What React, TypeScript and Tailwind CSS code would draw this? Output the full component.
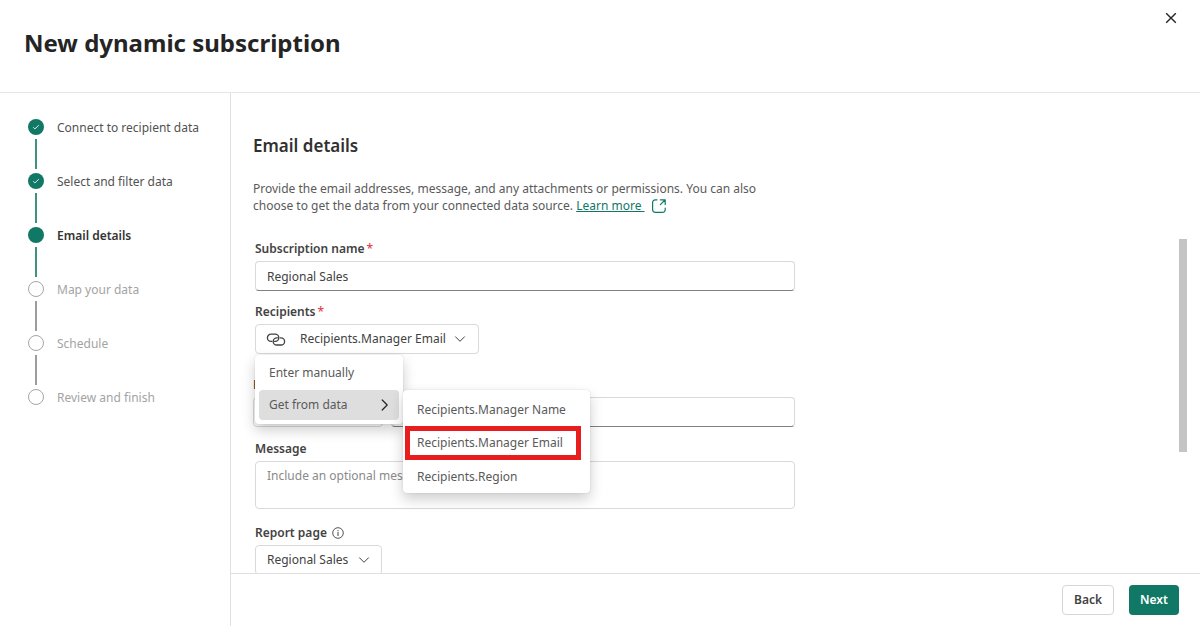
import { clsx } from "clsx";
import { type FC, type ReactNode, useState } from "react";

type StepState = "done" | "current" | "todo";

const STEPS: { label: string; state: StepState }[] = [
	{ label: "Connect to recipient data", state: "done" },
	{ label: "Select and filter data", state: "done" },
	{ label: "Email details", state: "current" },
	{ label: "Map your data", state: "todo" },
	{ label: "Schedule", state: "todo" },
	{ label: "Review and finish", state: "todo" },
];

const FIELDS = [
	"Recipients.Manager Name",
	"Recipients.Manager Email",
	"Recipients.Region",
];

const Chevron: FC<{ className?: string }> = ({ className }) => (
	<svg viewBox="0 0 12 12" className={clsx("h-3 w-3", className)} fill="none" stroke="currentColor" aria-hidden="true">
		<path d="M1.5 3.8 6 8.3l4.5-4.5" strokeLinecap="round" strokeLinejoin="round" />
	</svg>
);

const LinkIcon: FC = () => (
	<svg viewBox="0 0 20 16" className="h-4 w-5" fill="none" stroke="currentColor" strokeWidth="1.3" strokeLinecap="round" aria-hidden="true">
		<path d="M5.8 10.4H5a3.6 3.6 0 0 1 0-7.2h4.2a3.6 3.6 0 0 1 0 7.2h-.6" />
		<path d="M14.2 6.8h.8a3.6 3.6 0 0 1 0 7.2h-4.2a3.6 3.6 0 0 1 0-7.2h.6" />
	</svg>
);

const OpenIcon: FC = () => (
	<svg viewBox="0 0 16 16" className="ml-1.5 inline h-4 w-4 align-text-bottom" fill="none" stroke="currentColor" strokeWidth="1.2" strokeLinecap="round" strokeLinejoin="round" aria-hidden="true">
		<path d="M6 1.8H4.2A2.6 2.6 0 0 0 1.6 4.4v7.4a2.6 2.6 0 0 0 2.6 2.6h7.4a2.6 2.6 0 0 0 2.6-2.6V10" />
		<path d="M9.4 1.8h4.8v4.8M14 2 9.4 6.6" />
	</svg>
);

const InfoIcon: FC = () => (
	<svg viewBox="0 0 12 12" className="h-3 w-3" fill="none" stroke="currentColor" aria-hidden="true">
		<circle cx="6" cy="6" r="5.3" strokeWidth="0.9" />
		<path d="M6 5.3v3.3" strokeLinecap="round" />
		<circle cx="6" cy="3.6" r="0.6" fill="currentColor" stroke="none" />
	</svg>
);

const Step: FC<{ label: string; state: StepState; last: boolean }> = ({ label, state, last }) => (
	<li className="flex h-[54px] gap-3" aria-current={state === "current" ? "step" : undefined}>
		<div className="flex w-[18px] flex-col items-center gap-1">
			<span
				className={clsx(
					"flex h-4 w-4 shrink-0 items-center justify-center rounded-full",
					state === "todo" ? "border border-[#a6a6a6]" : "bg-[#117865]",
				)}
			>
				{state === "done" && (
					<svg viewBox="0 0 8 8" className="h-2 w-2" fill="none" stroke="#d5efe9" aria-hidden="true">
						<path d="m1.2 4.3 1.7 1.6 3.9-3.7" />
					</svg>
				)}
			</span>
			{!last && (
				<span className={clsx("mb-1 w-0.5 flex-1", state === "todo" ? "bg-[#9c9c9c]" : "bg-[#3e937f]")} />
			)}
		</div>
		<span
			className={clsx(
				"leading-[18px]",
				state === "done" && "text-[#525252]",
				state === "current" && "font-semibold text-[#333333]",
				state === "todo" && "text-[#a3a3a3]",
			)}
		>
			{label}
		</span>
	</li>
);

const Label: FC<{ htmlFor: string; required?: boolean; children: ReactNode }> = ({ htmlFor, required, children }) => (
	<label htmlFor={htmlFor} className="mb-0.5 flex h-5 items-center gap-0.5 font-semibold leading-5 text-[#424242]">
		{children}
		{required && <span className="font-normal text-[#e0303a]">*</span>}
	</label>
);

export default function App() {
	const [name, setName] = useState("Regional Sales");
	const [recipient, setRecipient] = useState("Recipients.Manager Email");
	const [open, setOpen] = useState(true);

	return (
		<div className="flex h-screen flex-col bg-white pb-[9px] font-['Noto_Sans','Open_Sans',sans-serif] text-xs text-[#424242]">
			<header className="flex h-[93px] shrink-0 items-start justify-between border-b border-[#e6e6e6] pl-6 pr-[21px]">
				<h1 className="pt-6 text-2xl font-bold leading-[38px] text-[#242424]">New dynamic subscription</h1>
				<button type="button" aria-label="Close" className="mt-2.5 flex h-4 w-4 items-center justify-center text-[#242424]">
					<svg viewBox="0 0 12 12" className="h-3 w-3" fill="none" stroke="currentColor" strokeWidth="1.4" aria-hidden="true">
						<path d="m1.2 1.2 9.6 9.6M10.8 1.2 1.2 10.8" />
					</svg>
				</button>
			</header>

			<div className="flex min-h-0 flex-1">
				<nav aria-label="Steps" className="w-[231px] shrink-0 border-r border-[#e0e0e0] pl-[27px] pt-[26px]">
					<ol>
						{STEPS.map((step, i) => (
							<Step key={step.label} {...step} last={i === STEPS.length - 1} />
						))}
					</ol>
				</nav>

				<div className="flex min-w-0 flex-1 flex-col">
					<main className="flex min-h-0 flex-1 justify-between overflow-hidden pl-[22px] pr-[13px]">
						<div className="w-full max-w-[542px] pt-[41px]">
							<h2 className="text-[17px] font-semibold leading-6 text-[#323130]">Email details</h2>
							<p className="mt-[22px] leading-[17px] text-[#5a5a5a]">
								Provide the email addresses, message, and any attachments or permissions. You can also
								<br />
								choose to get the data from your connected data source.{" "}
								<a href="#learn-more" className="whitespace-nowrap text-[#117865]">
									<span className="underline">Learn more&nbsp;</span>
									<OpenIcon />
								</a>
							</p>

							<form className="mt-[25px]" onSubmit={(e) => e.preventDefault()}>
								<div className="pl-0.5">
									<Label htmlFor="name" required>
										Subscription name
									</Label>
									<input
										id="name"
										value={name}
										onChange={(e) => setName(e.target.value)}
										className="block h-[30px] w-full rounded border border-[#d9d9d9] border-b-[#808080] px-[11px] outline-none"
									/>
								</div>

								<div className="relative mt-[11px] pl-0.5">
									<Label htmlFor="recipients" required>
										Recipients
									</Label>
									<button
										id="recipients"
										type="button"
										aria-haspopup="menu"
										aria-expanded={open}
										onClick={() => setOpen((v) => !v)}
										className="flex h-[30px] w-56 items-center rounded border border-[#d9d9d9] bg-white pl-2.5 pr-3"
									>
										<LinkIcon />
										<span className="ml-3.5">{recipient}</span>
										<Chevron className="ml-auto" />
									</button>

									{open && (
										<div
											role="menu"
											className="absolute left-0.5 top-[53px] z-10 w-[148px] rounded bg-white px-1 pb-1 pt-[3px] text-[#5a5a5a] shadow-[0_6px_14px_rgba(0,0,0,0.2),0_0_2px_rgba(0,0,0,0.12)]"
										>
											<button type="button" role="menuitem" className="block h-[30px] w-full px-2.5 text-left">
												Enter manually
											</button>
											<div className="relative mt-0.5">
												<button
													type="button"
													role="menuitem"
													aria-haspopup="menu"
													className="flex h-[30px] w-full items-center justify-between rounded bg-[#dedede] px-2.5"
												>
													Get from data
													<svg viewBox="0 0 8 12" className="h-3 w-2" fill="none" stroke="#242424" strokeWidth="1.2" aria-hidden="true">
														<path d="m1.2 1 5 5-5 5" strokeLinecap="round" strokeLinejoin="round" />
													</svg>
												</button>
												<div
													role="menu"
													className="absolute left-full top-0 ml-1 flex w-[187px] flex-col rounded bg-white px-0.5 pt-[3px] shadow-[0_6px_14px_rgba(0,0,0,0.2),0_0_2px_rgba(0,0,0,0.12)]"
												>
													{FIELDS.map((field) => (
														<button
															key={field}
															type="button"
															role="menuitem"
															onClick={() => setRecipient(field)}
															className={clsx(
																"w-44 whitespace-nowrap text-left",
																field === recipient
																	? "h-[34px] border-[5px] border-[#e81e1e] px-[7px]"
																	: "h-[33px] px-3",
															)}
														>
															{field}
														</button>
													))}
												</div>
											</div>
										</div>
									)}
								</div>

								<div className="mt-[21px]">
									<Label htmlFor="subject">Email subject</Label>
									<div className="flex gap-2">
										<select
											aria-label="Subject source"
											className="h-[30px] w-[130px] appearance-none rounded border border-[#d9d9d9] bg-white px-[11px]"
										>
											<option>Enter manually</option>
										</select>
										<input
											id="subject"
											className="h-[30px] min-w-0 flex-1 rounded border border-[#d9d9d9] border-b-[#808080] px-[11px] outline-none"
										/>
									</div>
								</div>

								<div className="mt-3 pl-0.5">
									<Label htmlFor="message">Message</Label>
									<textarea
										id="message"
										placeholder="Include an optional message"
										className="block h-12 w-full resize-none rounded border border-[#d9d9d9] px-[11px] py-[5px] leading-[18px] outline-none placeholder:text-[#8a8a8a]"
									/>
								</div>

								<div className="mt-3.5 pl-0.5">
									<Label htmlFor="page">
										<span>Report page&nbsp;</span>
										<InfoIcon />
									</Label>
									<div className="relative w-[127px]">
										<select
											id="page"
											className="h-[30px] w-full appearance-none rounded border border-[#d9d9d9] bg-white px-[11px]"
										>
											<option>Regional Sales</option>
										</select>
										<Chevron className="pointer-events-none absolute right-3 top-[9px]" />
									</div>
								</div>
							</form>
						</div>
						<div className="mt-[146px] h-[213px] w-2 shrink-0 bg-[#c4c4c4]" />
					</main>

					<footer className="flex h-[53px] shrink-0 items-center justify-end gap-[15px] border-t border-[#e0e0e0] pr-[21px] font-semibold">
						<button type="button" className="h-[30px] w-[52px] rounded border border-[#d6d6d6] text-[#424242]">
							Back
						</button>
						<button type="button" className="h-[30px] w-[50px] rounded bg-[#117865] text-white">
							Next
						</button>
					</footer>
				</div>
			</div>
		</div>
	);
}
